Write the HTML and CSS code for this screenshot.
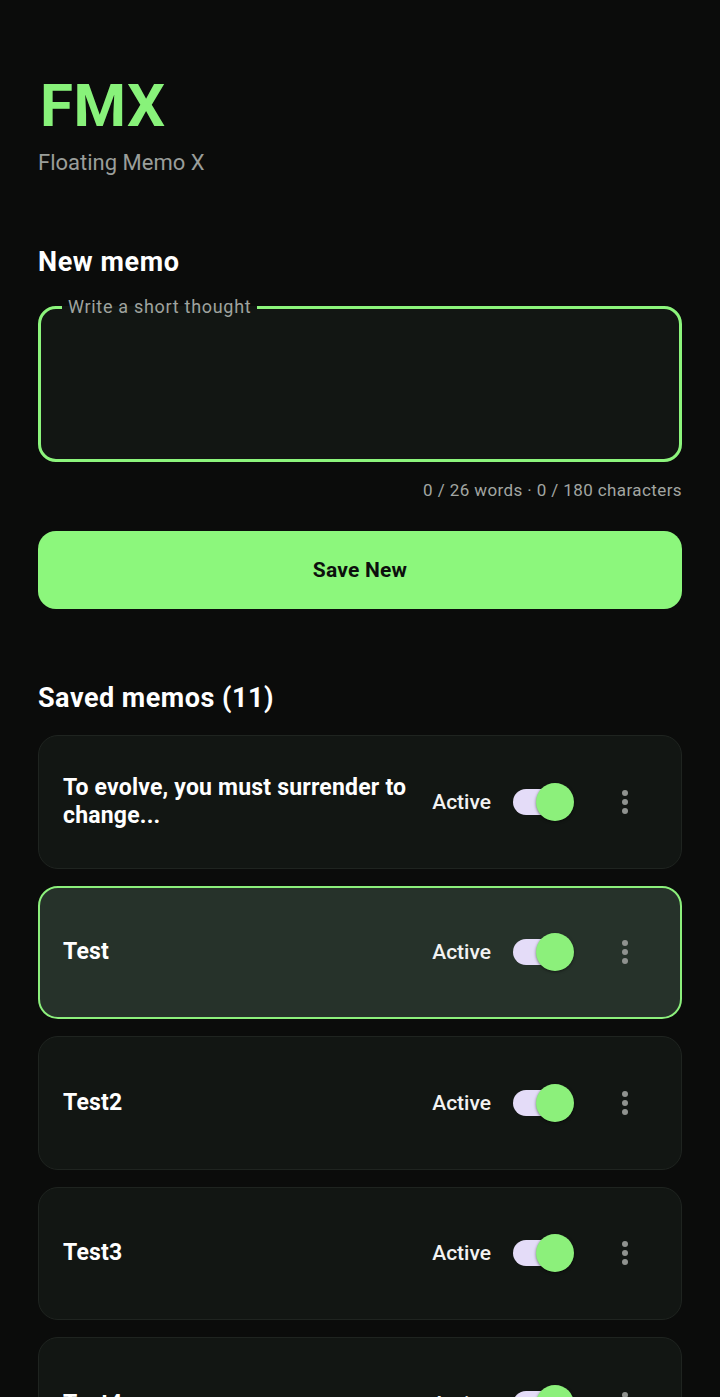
FILE: index.html
```html
<!DOCTYPE html>
<html lang="en">
<head>
<meta charset="utf-8">
<title>FMX</title>
<link rel="stylesheet" href="styles.css">
</head>
<body>
<main class="app">
  <header class="brand">
    <h1 class="brand-title">FMX</h1>
    <p class="brand-sub">Floating Memo X</p>
  </header>

  <section class="new-memo">
    <h2 class="section-title">New memo</h2>
    <fieldset class="memo-field">
      <legend class="memo-legend">Write a short thought</legend>
      <textarea class="memo-input" aria-label="Write a short thought"></textarea>
    </fieldset>
    <p class="counter">0 / 26 words · 0 / 180 characters</p>
    <button class="save-btn" type="button">Save New</button>
  </section>

  <section class="saved">
    <h2 class="section-title saved-title">Saved memos (11)</h2>
    <ul class="memo-list">
      <li class="memo-card">
        <span class="memo-text">To evolve, you must surrender to change...</span>
        <span class="memo-status">Active</span>
        <span class="switch"><span class="switch-track"></span><span class="switch-thumb"></span></span>
        <span class="kebab"><i></i><i></i><i></i></span>
      </li>
      <li class="memo-card selected">
        <span class="memo-text">Test</span>
        <span class="memo-status">Active</span>
        <span class="switch"><span class="switch-track"></span><span class="switch-thumb"></span></span>
        <span class="kebab"><i></i><i></i><i></i></span>
      </li>
      <li class="memo-card">
        <span class="memo-text">Test2</span>
        <span class="memo-status">Active</span>
        <span class="switch"><span class="switch-track"></span><span class="switch-thumb"></span></span>
        <span class="kebab"><i></i><i></i><i></i></span>
      </li>
      <li class="memo-card">
        <span class="memo-text">Test3</span>
        <span class="memo-status">Active</span>
        <span class="switch"><span class="switch-track"></span><span class="switch-thumb"></span></span>
        <span class="kebab"><i></i><i></i><i></i></span>
      </li>
      <li class="memo-card">
        <span class="memo-text">Test4</span>
        <span class="memo-status">Active</span>
        <span class="switch"><span class="switch-track"></span><span class="switch-thumb"></span></span>
        <span class="kebab"><i></i><i></i><i></i></span>
      </li>
    </ul>
  </section>
</main>
</body>
</html>
```

FILE: styles.css
```css
* { box-sizing: border-box; }

html, body {
  margin: 0;
  background: #0b0c0b;
}

body {
  font-family: Roboto, "Noto Sans", "Liberation Sans", sans-serif;
  color: #f4f5f4;
}

.app {
  padding: 76px 38px 0;
}

.brand-title {
  margin: 0;
  font-size: 60px;
  line-height: 60px;
  font-weight: 700;
  letter-spacing: 0.5px;
  color: #88f27a;
  padding-left: 2px;
}

.brand-sub {
  margin: 14px 0 0;
  font-size: 22px;
  line-height: 26px;
  color: #9a9e9a;
}

.section-title {
  margin: 70px 0 0;
  font-size: 27px;
  line-height: 32px;
  font-weight: 700;
  color: #ffffff;
  letter-spacing: 0.6px;
}

.memo-field {
  margin: 19px 0 0;
  padding: 0;
  border: 3px solid #8cf57c;
  border-radius: 18px;
  background: #121613;
}

.memo-legend {
  margin-left: 21px;
  padding: 0 6px;
  font-size: 18px;
  line-height: 20px;
  color: #9fa39f;
  letter-spacing: 0.7px;
}

.memo-input {
  display: block;
  width: 100%;
  height: 142px;
  border: 0;
  background: transparent;
  resize: none;
  outline: none;
  color: #fff;
  font: inherit;
}

.counter {
  margin: 18px 0 0;
  font-size: 17px;
  line-height: 20px;
  text-align: right;
  letter-spacing: 0.4px;
  color: #a2a6a2;
}

.save-btn {
  display: block;
  width: 100%;
  height: 78px;
  margin-top: 31px;
  border: 0;
  border-radius: 18px;
  background: #8cf77c;
  color: #0d0f0d;
  font-family: inherit;
  font-size: 21px;
  font-weight: 700;
  letter-spacing: 0.2px;
}

.saved-title {
  margin-top: 73px;
  letter-spacing: 0.5px;
}

.memo-list {
  list-style: none;
  margin: 21px 0 0;
  padding: 0;
  display: flex;
  flex-direction: column;
  gap: 17px;
}

.memo-card {
  display: flex;
  align-items: center;
  height: 133.5px;
  padding: 0 32px 0 24px;
  border: 1px solid #1f2420;
  border-radius: 20px;
  background: #121613;
}

.memo-card.selected {
  border: 2px solid #8cf07c;
  padding-left: 23px;
  padding-right: 31px;
  background: #26322a;
}

.memo-text {
  flex: 1;
  min-width: 0;
  margin-right: 22px;
  font-size: 23px;
  line-height: 28px;
  font-weight: 700;
  letter-spacing: 0.2px;
  color: #ffffff;
}

.memo-status {
  font-size: 21px;
  font-weight: 500;
  color: #f2f2f2;
  margin-right: 22px;
}

.switch {
  position: relative;
  width: 61px;
  height: 40px;
  flex: none;
}

.switch-track {
  position: absolute;
  left: 0;
  top: 7px;
  width: 50px;
  height: 26px;
  border-radius: 13px;
  background: #e4dcf8;
}

.switch-thumb {
  position: absolute;
  right: 0;
  top: 1px;
  width: 38px;
  height: 38px;
  border-radius: 50%;
  background: #8cf07b;
  box-shadow: 0 1px 3px rgba(0, 0, 0, 0.5);
}

.kebab {
  width: 48px;
  margin-left: 27px;
  display: flex;
  flex-direction: column;
  align-items: center;
  gap: 3px;
}

.kebab i {
  width: 6px;
  height: 6px;
  border-radius: 50%;
  background: #8f928f;
}
```
